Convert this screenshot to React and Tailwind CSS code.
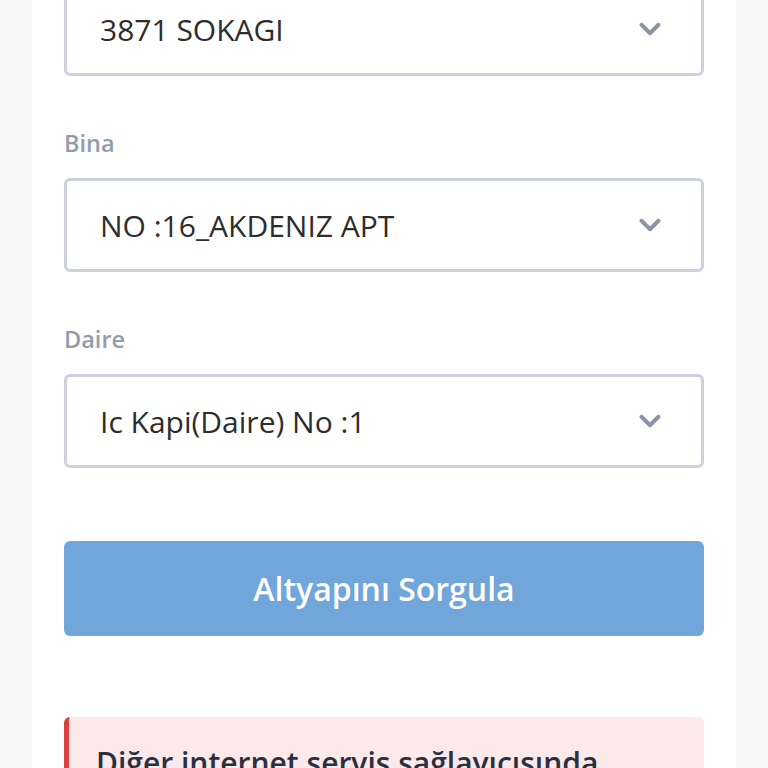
import { ChevronDown } from 'lucide-react';

const FIELDS = [
  { label: null, value: '3871 SOKAGI' },
  { label: 'Bina', value: 'NO :16_AKDENIZ APT' },
  { label: 'Daire', value: 'Ic Kapi(Daire) No :1' },
];

function SelectBox({ value }) {
  return (
    <div className="h-[94px] rounded-[6px] border-[3px] border-[#cdd1de] bg-white flex items-center justify-between pl-[33px] pr-[34px]">
      <span className="text-[30px] text-[#2d2d2d]">{value}</span>
      <ChevronDown className="w-[34px] h-[34px] text-[#8d94a5]" strokeWidth={2.8} />
    </div>
  );
}

export default function App() {
  return (
    <div className="h-[768px] overflow-hidden bg-[#f7f7f7] px-[32px]" style={{ fontFamily: '"Open Sans", sans-serif' }}>
      <div className="bg-white min-h-[820px] px-[32px] -mt-[18px]">
        {FIELDS.map((f, i) => (
          <div key={i} className={i > 0 ? 'mt-[52px]' : ''}>
            {f.label && (
              <div className="text-[23.5px] leading-[30px] font-semibold text-[#929cae] mb-[20px]">{f.label}</div>
            )}
            <SelectBox value={f.value} />
          </div>
        ))}

        <button className="mt-[73px] w-full h-[95px] rounded-[6px] bg-[#70a6da] text-white text-[32px] font-semibold">
          Altyapını Sorgula
        </button>

        <div className="mt-[81px] rounded-[6px] bg-[#fce9ea] border-l-[5px] border-[#d9413a] pl-[27px] pt-[26px] pb-6">
          <p className="text-[30px] leading-[40px] font-semibold text-[#2b3041]">
            Diğer internet servis sağlayıcısında
          </p>
        </div>
      </div>
    </div>
  );
}
